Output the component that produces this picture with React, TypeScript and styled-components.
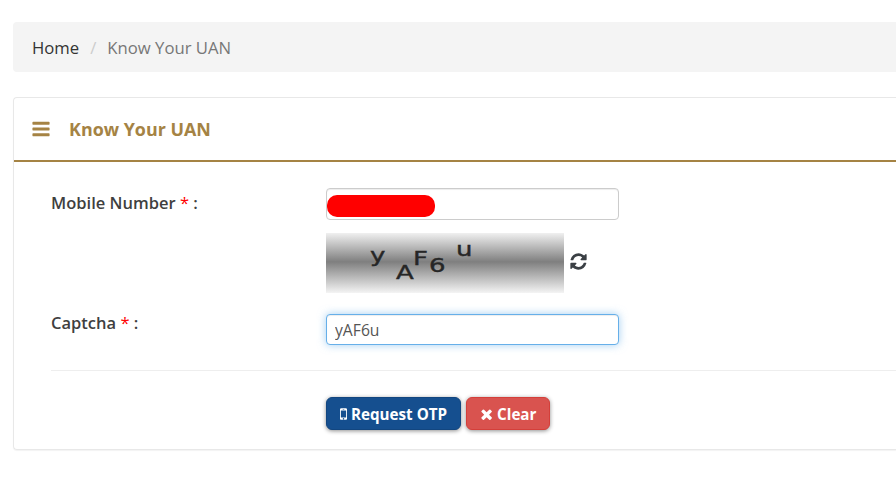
import styled, { createGlobalStyle } from 'styled-components'

const BARS_PATH =
  'M1664 1344v128q0 26-19 45t-45 19h-1408q-26 0-45-19t-19-45v-128q0-26 19-45t45-19h1408q26 0 45 19t19 45zm0-512v128q0 26-19 45t-45 19h-1408q-26 0-45-19t-19-45v-128q0-26 19-45t45-19h1408q26 0 45 19t19 45zm0-512v128q0 26-19 45t-45 19h-1408q-26 0-45-19t-19-45v-128q0-26 19-45t45-19h1408q26 0 45 19t19 45z'
const REFRESH_PATH =
  'M1639 1056q0 5-1 7-64 268-268 434.5t-478 166.5q-146 0-282.5-55t-243.5-157l-129 129q-19 19-45 19t-45-19-19-45v-448q0-26 19-45t45-19h448q26 0 45 19t19 45-19 45l-137 137q71 66 161 102t187 36q134 0 250-65t186-179q11-17 53-117 8-23 30-23h192q13 0 22.5 9.5t9.5 22.5zm25-800v448q0 26-19 45t-45 19h-448q-26 0-45-19t-19-45 19-45l138-138q-148-137-349-137-134 0-250 65t-186 179q-11 17-53 117-8 23-30 23h-199q-13 0-22.5-9.5t-9.5-22.5v-7q65-268 270-434.5t480-166.5q146 0 284 55.5t245 156.5l130-129q19-19 45-19t45 19 19 45z'
const MOBILE_PATH =
  'M976 1408q0-33-23.5-56.5t-56.5-23.5-56.5 23.5-23.5 56.5 23.5 56.5 56.5 23.5 56.5-23.5 23.5-56.5zm208-160v-704q0-13-9.5-22.5t-22.5-9.5h-512q-13 0-22.5 9.5t-9.5 22.5v704q0 13 9.5 22.5t22.5 9.5h512q13 0 22.5-9.5t9.5-22.5zm-192-848q0-16-16-16h-160q-16 0-16 16t16 16h160q16 0 16-16zm288-16v1024q0 52-38 90t-90 38h-512q-52 0-90-38t-38-90v-1024q0-52 38-90t90-38h512q52 0 90 38t38 90z'
const TIMES_PATH =
  'M1490 1322q0 40-28 68l-136 136q-28 28-68 28t-68-28l-294-294-294 294q-28 28-68 28t-68-28l-136-136q-28-28-28-68t28-68l294-294-294-294q-28-28-28-68t28-68l136-136q28-28 68-28t68 28l294 294 294-294q28-28 68-28t68 28l136 136q28 28 28 68t-28 68l-294 294 294 294q28 28 28 68z'

const captchaLetters = [
  { char: 'y', x: 44, y: 29 },
  { char: 'A', x: 70, y: 46 },
  { char: 'F', x: 87, y: 32 },
  { char: '6', x: 103, y: 39 },
  { char: 'u', x: 130, y: 23 }
]

const GlobalStyle = createGlobalStyle`
  html, body {
    margin: 0;
    padding: 0;
    overflow: hidden;
    background: #fff;
    font-family: "Open Sans", "Noto Sans", sans-serif;
    color: #3f3f3f;
  }
`

const Page = styled.div`
  height: 486px;
  padding: 22px 0 0 13px;
  box-sizing: border-box;
`

const Breadcrumb = styled.div`
  height: 50px;
  display: flex;
  align-items: center;
  padding: 0 19px;
  background: #f4f4f4;
  border-radius: 4px 0 0 4px;
  font-size: 16.7px;
`

const Crumb = styled.span`
  color: #333;
`

const Slash = styled.span`
  color: #ccc;
  margin: 0 11px;
`

const CurrentCrumb = styled.span`
  color: #777;
`

const Card = styled.div`
  margin-top: 25px;
  height: 353px;
  box-sizing: border-box;
  border: 1px solid #e8e8e8;
  border-right: none;
  border-radius: 4px 0 0 4px;
  box-shadow: 0 1px 1px rgba(0, 0, 0, 0.05);
`

const CardHeader = styled.div`
  height: 64px;
  box-sizing: border-box;
  display: flex;
  align-items: center;
  gap: 18px;
  padding: 0 17px;
  border-bottom: 2px solid #a58344;
  color: #a58344;
`

const CardTitle = styled.h3`
  margin: 0;
  font-size: 17.9px;
  font-weight: 700;
`

const CardBody = styled.div`
  padding: 26px 0 0 37px;
`

const FormRow = styled.div`
  display: grid;
  grid-template-columns: 275px 293px;
`

const CaptchaRow = styled.div`
  display: flex;
  align-items: center;
  gap: 5px;
  margin: 13px 0 0 275px;
`

const CaptchaInputRow = styled(FormRow)`
  margin-top: 21px;
`

const FieldLabel = styled.label<{ $top: number }>`
  padding-top: ${props => props.$top}px;
  font-size: 16.5px;
  font-weight: 600;
  line-height: 18px;
  color: #3f3f3f;
`

const Required = styled.span`
  color: #f00;
  font-weight: 400;
`

const MaskedField = styled.div`
  position: relative;
`

const RedMask = styled.div`
  position: absolute;
  left: 1px;
  top: 7px;
  width: 108px;
  height: 21.5px;
  background: #f00;
  border-radius: 10px;
`

const TextInput = styled.input<{ $focused?: boolean }>`
  display: block;
  width: 100%;
  height: ${props => (props.$focused ? 31 : 32)}px;
  box-sizing: border-box;
  padding: 0 8px;
  border-radius: 4px;
  outline: none;
  font-family: inherit;
  font-size: 15.7px;
  color: #555;
  border: 1px solid ${props => (props.$focused ? '#66afe9' : '#ccc')};
  box-shadow: ${props =>
    props.$focused
      ? 'inset 0 1px 1px rgba(0, 0, 0, 0.075), 0 0 8px rgba(102, 175, 233, 0.6)'
      : 'inset 0 1px 1px rgba(0, 0, 0, 0.075)'};
`

const CaptchaImage = styled.svg`
  display: block;
  flex: none;
`

const CaptchaLetter = styled.text`
  font-family: "DejaVu Sans", sans-serif;
  font-size: 20px;
  fill: #262626;
  stroke: #262626;
  stroke-width: 0.4px;
`

const Glyph = styled.svg`
  display: block;
  flex: none;
  fill: currentColor;
`

const RefreshIcon = styled(Glyph)`
  margin-bottom: 3px;
  color: #3a3f44;
`

const Divider = styled.div`
  height: 1px;
  margin-top: 25px;
  background: #eee;
`

const Actions = styled.div`
  display: flex;
  gap: 5px;
  margin: 26px 0 0 275px;
`

const ActionButton = styled.button<{ $bg: string; $border: string; $gap: number }>`
  display: flex;
  align-items: center;
  gap: ${props => props.$gap}px;
  height: 33px;
  padding: 0 13px;
  border-radius: 6px;
  border: 1px solid ${props => props.$border};
  background: ${props => props.$bg};
  color: #fff;
  font-family: inherit;
  font-size: 15.2px;
  font-weight: 700;
  box-shadow: 0 1px 4px rgba(0, 0, 0, 0.45);
`

function App() {
  return (
    <Page>
      <GlobalStyle />
      <Breadcrumb>
        <Crumb>Home</Crumb>
        <Slash>/</Slash>
        <CurrentCrumb>Know Your UAN</CurrentCrumb>
      </Breadcrumb>
      <Card>
        <CardHeader>
          <Glyph viewBox='0 0 1792 1792' width='20' height='20'>
            <path d={BARS_PATH} />
          </Glyph>
          <CardTitle>Know Your UAN</CardTitle>
        </CardHeader>
        <CardBody>
          <FormRow>
            <FieldLabel $top={6}>
              Mobile Number <Required>*</Required> :
            </FieldLabel>
            <MaskedField>
              <TextInput readOnly value='' />
              <RedMask />
            </MaskedField>
          </FormRow>
          <CaptchaRow>
            <CaptchaImage viewBox='0 0 238 60' width='238' height='60'>
              <defs>
                <linearGradient id='captchaFade' x1='0' y1='0' x2='0' y2='1'>
                  <stop offset='0' stopColor='#f0f0f0' />
                  <stop offset='0.48' stopColor='#7f7f7f' />
                  <stop offset='1' stopColor='#f4f4f4' />
                </linearGradient>
              </defs>
              <rect width='238' height='60' fill='url(#captchaFade)' />
              {captchaLetters.map(letter => (
                <CaptchaLetter key={letter.char} transform={`translate(${letter.x} ${letter.y}) scale(1.3 1)`}>
                  {letter.char}
                </CaptchaLetter>
              ))}
            </CaptchaImage>
            <RefreshIcon viewBox='0 0 1792 1792' width='19' height='19'>
              <path d={REFRESH_PATH} />
            </RefreshIcon>
          </CaptchaRow>
          <CaptchaInputRow>
            <FieldLabel $top={0}>
              Captcha <Required>*</Required> :
            </FieldLabel>
            <TextInput $focused readOnly value='yAF6u' />
          </CaptchaInputRow>
          <Divider />
          <Actions>
            <ActionButton $bg='#154f8f' $border='#124680' $gap={4}>
              <Glyph viewBox='512 256 768 1280' width='7' height='12'>
                <path d={MOBILE_PATH} />
              </Glyph>
              Request OTP
            </ActionButton>
            <ActionButton $bg='#d9534f' $border='#d43f3a' $gap={5}>
              <Glyph viewBox='162 202 1328 1352' width='12' height='12'>
                <path d={TIMES_PATH} />
              </Glyph>
              Clear
            </ActionButton>
          </Actions>
        </CardBody>
      </Card>
    </Page>
  )
}

export default App
